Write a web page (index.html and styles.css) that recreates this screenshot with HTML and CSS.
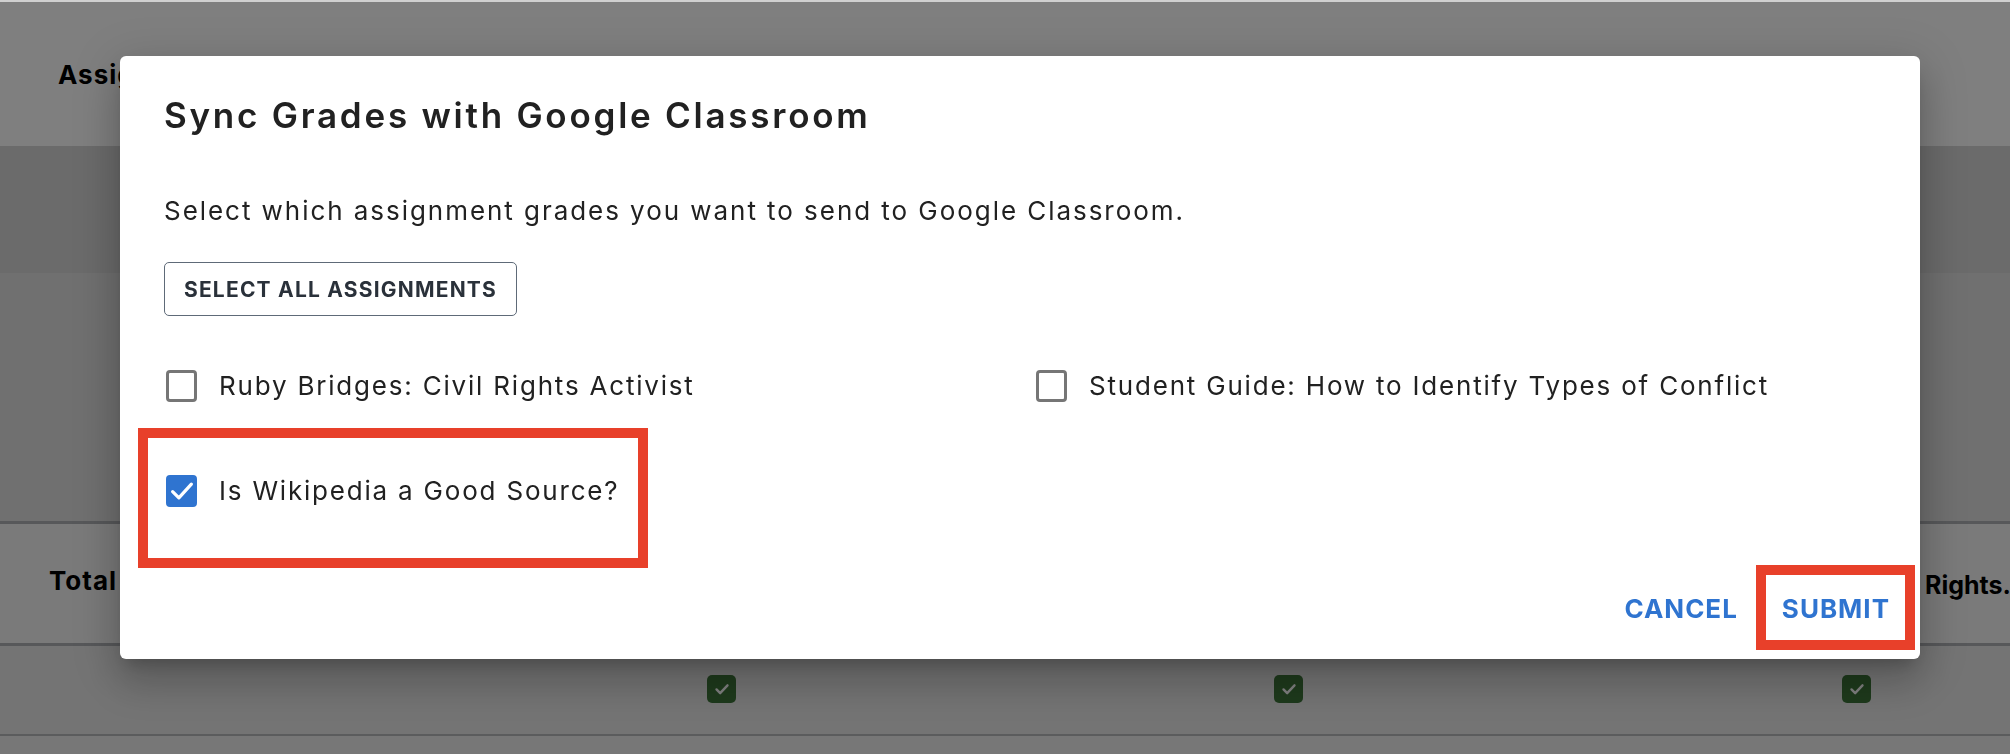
FILE: index.html
```html
<!DOCTYPE html>
<html lang="en">
<head>
<meta charset="utf-8">
<title>Sync Grades with Google Classroom</title>
<link rel="stylesheet" href="styles.css">
</head>
<body>
<div class="page">
  <div class="topstrip"></div>
  <div class="header-row"><span class="head-cell">Assignments</span></div>
  <div class="band-row"></div>
  <div class="body-row"></div>
  <div class="total-row">
    <span class="total-cell">Total Points</span>
    <span class="rights-cell">Rights.</span>
  </div>
  <div class="check-row">
    <span class="gcheck"><svg viewBox="0 0 24 24"><path d="M6 12.5l4 4 8-8.5"/></svg></span>
    <span class="gcheck"><svg viewBox="0 0 24 24"><path d="M6 12.5l4 4 8-8.5"/></svg></span>
    <span class="gcheck"><svg viewBox="0 0 24 24"><path d="M6 12.5l4 4 8-8.5"/></svg></span>
  </div>
  <div class="tail-row"></div>
</div>

<div class="overlay"></div>

<div class="dialog" role="dialog">
  <h2 class="dialog-title">Sync Grades with Google Classroom</h2>
  <p class="dialog-text">Select which assignment grades you want to send to Google Classroom.</p>
  <button class="outline-btn">SELECT ALL ASSIGNMENTS</button>
  <div class="options">
    <label class="option"><span class="box"></span><span class="opt-label">Ruby Bridges: Civil Rights Activist</span></label>
    <label class="option"><span class="box"></span><span class="opt-label">Student Guide: How to Identify Types of Conflict</span></label>
    <label class="option"><span class="box checked"><svg viewBox="0 0 24 24"><path d="M4.5 12.5l5 5 10-11"/></svg></span><span class="opt-label">Is Wikipedia a Good Source?</span></label>
  </div>
  <div class="actions">
    <button class="text-btn">CANCEL</button>
    <button class="text-btn">SUBMIT</button>
  </div>
  <div class="mark mark-option"></div>
  <div class="mark mark-submit"></div>
</div>
</body>
</html>
```
FILE: styles.css
```css
* { box-sizing: border-box; }
html, body { margin: 0; padding: 0; }
body {
  width: 2010px;
  height: 754px;
  overflow: hidden;
  font-family: "Inter", "Open Sans", sans-serif;
  color: #212121;
  background: #ececec;
}

/* ---------- background page ---------- */
.page { display: flex; flex-direction: column; }
.topstrip { height: 2px; background: #d0d0d0; }
.header-row {
  height: 144px;
  background: #ffffff;
  display: flex;
  align-items: center;
  padding-left: 58px;
}
.head-cell, .total-cell, .rights-cell {
  font-weight: 700;
  font-size: 26px;
  color: #000;
  white-space: nowrap;
  letter-spacing: 1px;
}
.band-row { height: 127px; background: #d6d6d6; }
.body-row {
  height: 251px;
  background: #e0e0e0;
  border-bottom: 3px solid #aeb1b5;
}
.total-row {
  height: 122px;
  background: #f5f5f5;
  border-bottom: 3px solid #aeb1b5;
  display: grid;
  grid-template-columns: 1925px 1fr;
  align-items: center;
}
.total-cell { padding-left: 49px; margin-top: -6px; }
.rights-cell { margin-top: 2px; font-size: 25px; letter-spacing: 0; }
.check-row {
  height: 90px;
  background: #e8e8e8;
  border-bottom: 2px solid #b6b8bb;
  display: grid;
  grid-template-columns: 707px 567px 568px 29px;
  align-items: start;
  padding-top: 29px;
}
.gcheck {
  width: 29px;
  height: 28px;
  border-radius: 5px;
  background: #3d7439;
  display: flex;
  align-items: center;
  justify-content: center;
}
.gcheck:nth-child(1) { grid-column: 2; }
.gcheck:nth-child(2) { grid-column: 3; }
.gcheck:nth-child(3) { grid-column: 4; }
.gcheck svg { width: 22px; height: 22px; fill: none; stroke: #ffffff; stroke-width: 2.6; stroke-linecap: round; stroke-linejoin: round; }
.tail-row { height: 20px; background: #eeeeee; }

.overlay {
  position: fixed;
  left: 0; right: 0; top: 2px; bottom: 0;
  background: rgba(0, 0, 0, 0.5);
}

/* ---------- dialog ---------- */
.dialog {
  position: absolute;
  left: 120px;
  top: 56px;
  width: 1800px;
  height: 603px;
  background: #fff;
  border-radius: 6px;
  box-shadow: 0 11px 15px -7px rgba(0,0,0,.2), 0 24px 38px 3px rgba(0,0,0,.14), 0 9px 46px 8px rgba(0,0,0,.12);
  padding: 35px 0 0 44px;
  display: flex;
  flex-direction: column;
  align-items: flex-start;
}
.dialog-title {
  margin: 0;
  font-size: 35px;
  line-height: 48px;
  font-weight: 600;
  color: #212121;
  letter-spacing: 2.75px;
}
.dialog-text {
  margin: 54px 0 0;
  font-size: 26px;
  line-height: 36px;
  font-weight: 400;
  color: #212121;
  letter-spacing: 1.95px;
}
.outline-btn {
  margin-top: 33px;
  height: 54px;
  width: 353px;
  padding: 0;
  border: 1.5px solid #5e6a78;
  border-radius: 5px;
  background: #fff;
  font-family: inherit;
  font-weight: 700;
  font-size: 21px;
  color: #2a313a;
  letter-spacing: 1.2px;
}
.options {
  margin-top: 46px;
  display: grid;
  grid-template-columns: 870px 1fr;
  row-gap: 57px;
  width: 100%;
}
.option {
  display: flex;
  align-items: center;
  height: 48px;
  padding-left: 2px;
}
.box {
  width: 31px;
  height: 32px;
  border: 3px solid #767676;
  border-radius: 4px;
  flex: none;
  display: flex;
  align-items: center;
  justify-content: center;
}
.box.checked { background: #2f74d0; border-color: #2f74d0; }
.box svg { width: 30px; height: 30px; flex: none; fill: none; stroke: #fff; stroke-width: 2.6; stroke-linecap: round; stroke-linejoin: round; }
.opt-label {
  margin-left: 22px;
  font-size: 26px;
  line-height: 36px;
  color: #212121;
  white-space: nowrap;
  letter-spacing: 1.8px;
}
.actions {
  margin-top: auto;
  align-self: flex-end;
  display: flex;
  gap: 12px;
  padding: 0 14px 23px 0;
}
.text-btn {
  height: 56px;
  padding: 0 16px;
  border: none;
  background: transparent;
  font-family: inherit;
  font-weight: 700;
  font-size: 26px;
  color: #2f74d0;
  letter-spacing: 1px;
}

/* annotation marks */
.mark { position: absolute; border: 10px solid #e8402a; }
.mark-option { left: 18px; top: 372px; width: 510px; height: 140px; }
.mark-submit { left: 1636px; top: 509px; width: 159px; height: 85px; }
```
